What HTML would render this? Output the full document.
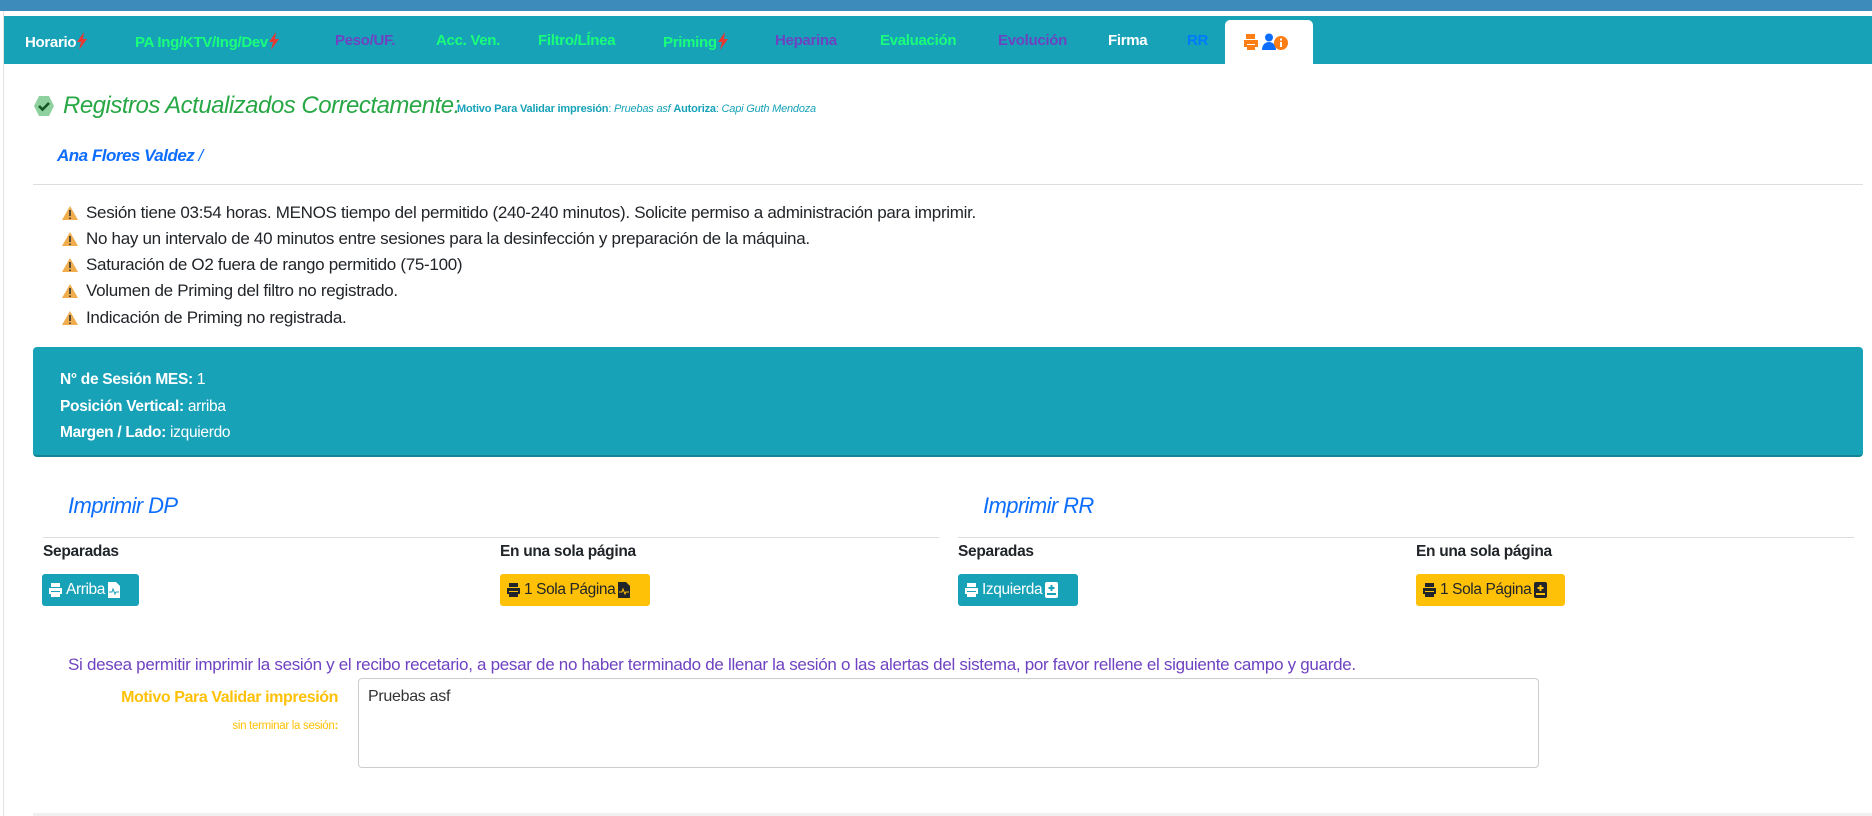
<!DOCTYPE html>
<html><head><meta charset="utf-8"><style>
*{box-sizing:border-box;margin:0;padding:0}
body{width:1872px;height:816px;background:#fff;font-family:"Liberation Sans",sans-serif;position:relative;overflow:hidden;color:#212529}
.a{position:absolute;white-space:nowrap}
.tab{position:absolute;top:32px;font-weight:bold;font-size:15px;letter-spacing:-0.3px;white-space:nowrap}
.g{color:#1aff7a}.p{color:#6f42c1}.w{color:#fff}
.bolt{display:inline-block;vertical-align:-3px}
.warn{position:absolute;left:61px;font-size:17px;letter-spacing:-0.3px;color:#212529;white-space:nowrap}
.warn svg{position:absolute;left:0;top:2px}
.warn span{position:absolute;left:25px;top:0;white-space:nowrap}
.btn{position:absolute;height:32px;border-radius:3px;top:574px;display:flex;align-items:center;padding:0 6px;font-size:15.5px;letter-spacing:-0.4px;gap:3px;white-space:nowrap}
.bt{background:#17a2b8;color:#fff}.by{background:#ffc107;color:#212529}
.h5{position:absolute;font-weight:bold;font-size:15.5px;top:543px;letter-spacing:-0.3px;white-space:nowrap}
</style></head><body>
<div class="a" style="left:0;top:0;width:1872px;height:11px;background:#3d8bba"></div>
<div class="a" style="left:3px;top:11px;width:1px;height:805px;background:#e3e3e3"></div>
<div class="a" style="left:4px;top:16px;width:1868px;height:48px;background:#17a2b8"></div>
<div class="a" style="left:1225px;top:20px;width:88px;height:45px;background:#fff;border-radius:5px 5px 0 0"></div>
<div class="tab w" style="left:25px">Horario<svg class="bolt" width="12" height="18" viewBox="0 0 12 18"><path d="M8 0L1 10h4l-2 8 8-11H7z" fill="#e53935"/></svg></div>
<div class="tab g" style="left:135px">PA Ing/KTV/Ing/Dev<svg class="bolt" width="12" height="18" viewBox="0 0 12 18"><path d="M8 0L1 10h4l-2 8 8-11H7z" fill="#e53935"/></svg></div>
<div class="tab p" style="left:335px">Peso/UF.</div>
<div class="tab g" style="left:436px">Acc. Ven.</div>
<div class="tab g" style="left:538px">Filtro/LÍnea</div>
<div class="tab g" style="left:663px">Priming<svg class="bolt" width="12" height="18" viewBox="0 0 12 18"><path d="M8 0L1 10h4l-2 8 8-11H7z" fill="#e53935"/></svg></div>
<div class="tab p" style="left:775px">Heparina</div>
<div class="tab g" style="left:880px">Evaluación</div>
<div class="tab p" style="left:998px">Evolución</div>
<div class="tab w" style="left:1108px">Firma</div>
<div class="tab" style="left:1187px;color:#007bff">RR</div>
<svg class="a" style="left:1243px;top:33px" width="52" height="18" viewBox="0 0 52 18">
<path d="M3 1h9v5H3z M1 7h14v7h-3v-3H4v3H1z M4 12h8v5H4z" fill="#fd7e14"/>
<circle cx="26" cy="4.5" r="4" fill="#0d6efd"/><path d="M19 17c0-5 3-8 7-8s7 3 7 8z" fill="#0d6efd"/>
<circle cx="38" cy="10" r="7" fill="#fd7e14"/><rect x="37" y="9" width="2" height="5" fill="#fff"/><rect x="37" y="5.5" width="2" height="2" fill="#fff"/></svg>

<svg class="a" style="left:33px;top:95px" width="22" height="22" viewBox="0 0 22 22"><path d="M6 1h10l5 10-5 10H6L1 11z" fill="#8fd19e"/><path d="M6 11l3.5 3.5L16 8" stroke="#155724" stroke-width="2.6" fill="none"/></svg>
<div class="a" style="left:63px;top:92px;font-size:24px;font-style:italic;color:#28a745;letter-spacing:-0.5px">Registros Actualizados Correctamente:</div>
<div class="a" style="left:457px;top:103px;font-size:11px;color:#17a2b8;letter-spacing:-0.2px"><b>Motivo Para Validar impresión</b>: <i>Pruebas asf</i> <b>Autoriza</b>: <i>Capi Guth Mendoza</i></div>
<div class="a" style="left:57px;top:146px;font-size:17px;font-weight:bold;font-style:italic;color:#0d6efd;letter-spacing:-0.5px">Ana Flores Valdez <span style="font-weight:normal">/</span></div>
<div class="a" style="left:33px;top:184px;width:1830px;height:1px;background:#ddd"></div>

<div class="warn" style="top:203px"><svg width="18" height="16" viewBox="0 0 18 16"><path d="M9 1L17 15H1z" fill="#f0ad4e"/><path d="M9 5v6M9 12.5v1.5" stroke="#333" stroke-width="1.6"/></svg><span>Sesión tiene 03:54 horas. MENOS tiempo del permitido (240-240 minutos). Solicite permiso a administración para imprimir.</span></div>
<div class="warn" style="top:229px"><svg width="18" height="16" viewBox="0 0 18 16"><path d="M9 1L17 15H1z" fill="#f0ad4e"/><path d="M9 5v6M9 12.5v1.5" stroke="#333" stroke-width="1.6"/></svg><span>No hay un intervalo de 40 minutos entre sesiones para la desinfección y preparación de la máquina.</span></div>
<div class="warn" style="top:255px"><svg width="18" height="16" viewBox="0 0 18 16"><path d="M9 1L17 15H1z" fill="#f0ad4e"/><path d="M9 5v6M9 12.5v1.5" stroke="#333" stroke-width="1.6"/></svg><span>Saturación de O2 fuera de rango permitido (75-100)</span></div>
<div class="warn" style="top:281px"><svg width="18" height="16" viewBox="0 0 18 16"><path d="M9 1L17 15H1z" fill="#f0ad4e"/><path d="M9 5v6M9 12.5v1.5" stroke="#333" stroke-width="1.6"/></svg><span>Volumen de Priming del filtro no registrado.</span></div>
<div class="warn" style="top:308px"><svg width="18" height="16" viewBox="0 0 18 16"><path d="M9 1L17 15H1z" fill="#f0ad4e"/><path d="M9 5v6M9 12.5v1.5" stroke="#333" stroke-width="1.6"/></svg><span>Indicación de Priming no registrada.</span></div>

<div class="a" style="left:33px;top:347px;width:1830px;height:110px;background:#17a2b8;border-radius:4px;border-bottom:2px solid #138496"></div>
<div class="a" style="left:60px;top:367px;color:#fff;font-size:15.5px;line-height:26.5px;letter-spacing:-0.3px"><b>N° de Sesión MES:</b> 1<br><b>Posición Vertical:</b> arriba<br><b>Margen / Lado:</b> izquierdo</div>

<div class="a" style="left:68px;top:493px;font-size:22px;font-style:italic;color:#0d6efd;letter-spacing:-0.6px">Imprimir DP</div>
<div class="a" style="left:983px;top:493px;font-size:22px;font-style:italic;color:#0d6efd;letter-spacing:-0.6px">Imprimir RR</div>
<div class="a" style="left:43px;top:537px;width:896px;height:1px;background:#ddd"></div>
<div class="a" style="left:958px;top:537px;width:896px;height:1px;background:#ddd"></div>
<div class="h5" style="left:43px">Separadas</div>
<div class="h5" style="left:500px">En una sola página</div>
<div class="h5" style="left:958px">Separadas</div>
<div class="h5" style="left:1416px">En una sola página</div>

<div class="btn bt" style="left:42px;width:97px"><svg width="15" height="16" viewBox="0 0 15 16"><path d="M3 1h9v4H3zM1 6h13v6h-2V9H3v3H1zM3 10h9v5H3z" fill="#fff"/></svg>Arriba<svg width="12" height="16" viewBox="0 0 12 16"><path d="M0 0h8l4 4v12H0z" fill="#fff"/><path d="M1 10h3l1-3 2 5 1-2h3" stroke="#17a2b8" fill="none"/></svg></div>
<div class="btn by" style="left:500px;width:150px"><svg width="15" height="16" viewBox="0 0 15 16"><path d="M3 1h9v4H3zM1 6h13v6h-2V9H3v3H1zM3 10h9v5H3z" fill="#212529"/></svg>1 Sola Página<svg width="12" height="16" viewBox="0 0 12 16"><path d="M0 0h8l4 4v12H0z" fill="#212529"/><path d="M1 10h3l1-3 2 5 1-2h3" stroke="#ffc107" fill="none"/></svg></div>
<div class="btn bt" style="left:958px;width:120px"><svg width="15" height="16" viewBox="0 0 15 16"><path d="M3 1h9v4H3zM1 6h13v6h-2V9H3v3H1zM3 10h9v5H3z" fill="#fff"/></svg>Izquierda<svg width="13" height="16" viewBox="0 0 13 16"><rect x="0" y="0" width="13" height="16" rx="2" fill="#fff"/><path d="M6.5 3v6M3.5 6h6M2 12h9" stroke="#17a2b8" stroke-width="2"/></svg></div>
<div class="btn by" style="left:1416px;width:149px"><svg width="15" height="16" viewBox="0 0 15 16"><path d="M3 1h9v4H3zM1 6h13v6h-2V9H3v3H1zM3 10h9v5H3z" fill="#212529"/></svg>1 Sola Página<svg width="13" height="16" viewBox="0 0 13 16"><rect x="0" y="0" width="13" height="16" rx="2" fill="#212529"/><path d="M6.5 3v6M3.5 6h6M2 12h9" stroke="#ffc107" stroke-width="2"/></svg></div>

<div class="a" style="left:68px;top:655px;font-size:17px;color:#6f42c1;letter-spacing:-0.3px">Si desea permitir imprimir la sesión y el recibo recetario, a pesar de no haber terminado de llenar la sesión o las alertas del sistema, por favor rellene el siguiente campo y guarde.</div>
<div class="a" style="right:1534px;top:689px;font-size:16px;font-weight:bold;color:#ffc107;letter-spacing:-0.4px">Motivo Para Validar impresión</div>
<div class="a" style="right:1534px;top:720px;font-size:11.5px;color:#ffc107;letter-spacing:-0.3px">sin terminar la sesión<b>:</b></div>
<div class="a" style="left:358px;top:678px;width:1181px;height:90px;border:1px solid #ccc;border-radius:4px;padding:9px;font-size:16px;color:#333;letter-spacing:-0.3px">Pruebas asf</div>
<div class="a" style="left:33px;top:813px;width:1839px;height:3px;background:#f0f0f0"></div>
</body></html>
